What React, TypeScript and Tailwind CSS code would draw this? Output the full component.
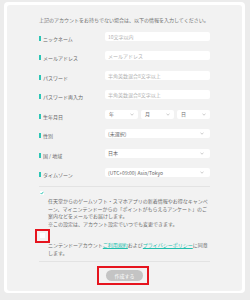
import React from 'react';

const font = { fontFamily: '"Noto Sans CJK JP", "Noto Sans", sans-serif' };

const Chevron: React.FC = () => (
  <svg width="4" height="3" viewBox="0 0 4 3" className="shrink-0">
    <polyline points="0.5,0.8 2,2.2 3.5,0.8" fill="none" stroke="#a8a8a8" strokeWidth="0.6" />
  </svg>
);

const Label: React.FC<{ text: string }> = ({ text }) => (
  <div className="flex w-[66px] shrink-0 items-center gap-[2px] pt-[4px]">
    <span className="h-[5px] w-[2px] bg-[#2cc5b5]" />
    <span className="text-[5px] leading-[5px] text-[#666]">{text}</span>
  </div>
);

const TextField: React.FC<{ placeholder: string }> = ({ placeholder }) => (
  <div className="flex h-[9px] w-[105px] items-center rounded-[2px] bg-white pl-[3px] text-[5px] text-[#b0b0b0]">
    {placeholder}
  </div>
);

const SelectBox: React.FC<{ value: string }> = ({ value }) => (
  <div className="flex h-[9px] items-center justify-between rounded-[2px] bg-white pl-[3px] pr-[6px] text-[5px] text-[#666]">
    <span>{value}</span>
    <Chevron />
  </div>
);

const Row: React.FC<{ label: string; children: React.ReactNode }> = ({ label, children }) => (
  <div className="flex h-[9px]">
    <Label text={label} />
    <div className="w-[105px]">{children}</div>
  </div>
);

export default function App() {
  return (
    <div className="min-h-screen bg-[#ececec] pb-[7px] pl-[4px] pr-[5px] pt-[2px]" style={font}>
      <div className="h-[291px] rounded-[4px] bg-white px-[3px] pb-[2px] pt-[3px]">
        <div className="h-full rounded-[3px] bg-[#f2f2f2] px-[32px] pt-[11px]">
          <p className="text-[5px] leading-[7px] text-[#707070] whitespace-nowrap">
            上記のアカウントをお持ちでない場合は、以下の情報を入力してください。
          </p>

          <div className="mt-[9px] flex flex-col gap-[10.43px]">
            <Row label="ニックネーム">
              <TextField placeholder="10文字以内" />
            </Row>
            <Row label="メールアドレス">
              <TextField placeholder="メールアドレス" />
            </Row>
            <Row label="パスワード">
              <TextField placeholder="半角英数混合8文字以上" />
            </Row>
            <Row label="パスワード再入力">
              <TextField placeholder="半角英数混合8文字以上" />
            </Row>
            <Row label="生年月日">
              <div className="grid grid-cols-3 gap-[3px]">
                {['年', '月', '日'].map((v) => (
                  <div
                    key={v}
                    className="flex h-[9px] items-center justify-between rounded-[2px] bg-white pl-[4px] pr-[4px] text-[5px] text-[#707070]"
                  >
                    <span>{v}</span>
                    <Chevron />
                  </div>
                ))}
              </div>
            </Row>
            <Row label="性別">
              <SelectBox value="(未選択)" />
            </Row>
            <Row label="国 / 地域">
              <SelectBox value="日本" />
            </Row>
            <Row label="タイムゾーン">
              <SelectBox value="(UTC+09:00) Asia/Tokyo" />
            </Row>
          </div>

          <div className="mt-[9px] border-t border-[#e3e3e3]" />

          {/* メール配信 */}
          <div className="ml-[1px] mt-[4px] flex h-[4px] w-[4px] items-center justify-center bg-white">
            <svg width="4" height="4" viewBox="0 0 4 4">
              <polyline points="0.6,2 1.6,3.1 3.4,0.8" fill="none" stroke="#22bfae" strokeWidth="0.9" />
            </svg>
          </div>
          <p className="ml-[9px] mt-[2px] whitespace-nowrap text-[5px] leading-[7.7px] text-[#6a6a6a]">
            任天堂からのゲームソフト・スマホアプリの新着情報やお得なキャンペ
            <br />
            ーン、マイニンテンドーからの「ポイントがもらえるアンケート」のご
            <br />
            案内などをメールでお届けします。
            <br />
            ※この設定は、アカウント設定でいつでも変更できます。
          </p>

          {/* 規約同意 */}
          <div className="relative ml-[1px] mt-[5.7px] h-[5px] w-[5px] bg-white">
            <span className="absolute -bottom-[4.5px] -left-[5px] -right-[5px] -top-[4.5px] border-2 border-[#e6141e]" />
          </div>
          <p className="ml-[9px] mt-[2.7px] whitespace-nowrap text-[5px] leading-[7.7px] text-[#6a6a6a]">
            ニンテンドーアカウント
            <span className="text-[#22bfae] underline">ご利用規約</span>
            および
            <span className="text-[#22bfae] underline">プライバシーポリシー</span>
            に同意
            <br />
            します。
          </p>

          <div className="mt-[4.5px] border-t border-[#e3e3e3]" />

          <div className="mt-[8px] flex justify-center">
            <div className="relative">
              <button className="flex h-[11px] w-[37px] items-center justify-center rounded-full bg-[#c4c4c4] text-[5px] text-white">
                作成する
              </button>
              <span className="absolute -bottom-[4px] -left-[9px] -right-[6px] -top-[4px] border-2 border-[#e6141e]" />
            </div>
          </div>
        </div>
      </div>
    </div>
  );
}
